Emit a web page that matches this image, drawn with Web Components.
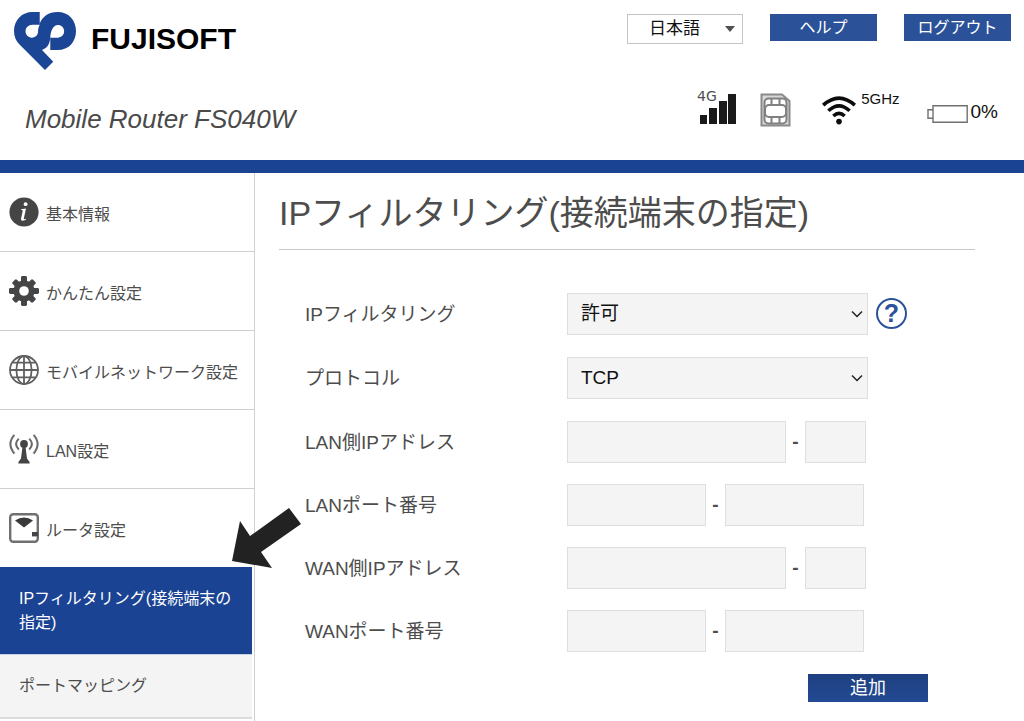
<!DOCTYPE html>
<html lang="ja">
<head>
<meta charset="utf-8">
<meta name="viewport" content="width=device-width, initial-scale=1">
<title>Mobile Router FS040W</title>
<style>
html, body { margin: 0; height: 100%; }
body { font-family: "Liberation Sans", "Noto Sans CJK JP", sans-serif; color: #4d4d4d; background: #fff; }
</style>
</head>
<body>
<router-app></router-app>
<script>
const define = (name, html, setup) => {
  const template = document.createElement('template');
  template.innerHTML = html;
  customElements.define(name, class extends HTMLElement {
    constructor() {
      super();
      this.attachShadow({ mode: 'open' }).append(template.content.cloneNode(true));
    }
    connectedCallback() { if (setup) setup(this, this.shadowRoot); }
  });
};

const ICONS = {
  info: `<circle cx="15" cy="15" r="14.6" fill="#454545"/><circle cx="16.6" cy="7.2" r="1.9" fill="#fff"/><path d="M12.2 12.2 17 11.4 14.8 21.6Q14.6 22.8 17 21.8L16.8 22.8Q11.6 25 12 21.8L13.8 13.6Q13.6 12.9 12 13.1Z" fill="#fff"/>`,
  gear: `<g fill="#454545"><rect x="12" y="0" width="6" height="30" rx="1.4"/><rect x="0" y="12" width="30" height="6" rx="1.4"/><g transform="rotate(45 15 15)"><rect x="12" y="0.6" width="6" height="28.8" rx="1.4"/><rect x="0.6" y="12" width="28.8" height="6" rx="1.4"/></g><circle cx="15" cy="15" r="10.6"/></g><circle cx="15" cy="15" r="4.8" fill="#fff"/>`,
  globe: `<g fill="none" stroke="#606060" stroke-width="1.8"><circle cx="15" cy="15" r="14"/><ellipse cx="15" cy="15" rx="7.6" ry="14"/><path d="M15 1V29M1 15H29M3.6 7.6H26.4M3.6 22.4H26.4"/></g>`,
  antenna: `<g fill="none" stroke="#6a6a6a" stroke-width="2"><path d="M5.4 .8Q-2.6 10 5.4 19.6M24.6 .8Q32.6 10 24.6 19.6M9.8 4.6Q4.4 10 9.8 15.6M20.2 4.6Q25.6 10 20.2 15.6"/></g><circle cx="15" cy="10" r="3.9" fill="#454545"/><path d="M13.6 12H16.4L18 24.4 20.6 28V29.6H9.4V28L12 24.4Z" fill="#454545"/>`,
  router: `<rect x="1.2" y="1.2" width="27.6" height="27.6" rx="3" fill="#fff" stroke="#707070" stroke-width="2.4"/><path d="M6 7.6Q15 1.400 24 7.6L15 14.6Z" fill="#3a3a3a"/><rect x="23" y="19" width="6" height="4.4" fill="#454545"/>`
};

define('brand-logo', `
<style>
:host { display: flex; align-items: center; gap: 15px; color: #000; font: bold 30px/36px "Liberation Sans", sans-serif; }
svg { width: 62px; height: 58px; flex: none; }
span { padding-bottom: 4px; }
</style>
<svg viewBox="18 18 188 174" preserveAspectRatio="none" aria-hidden="true">
  <path fill="#1b4595" fill-rule="evenodd" d="M96 18H74C42 18 18 42 18 75C18 92 24 104 34 115L112 192L137 167L103 132C120 126 127 113 128 94V132H150C184 132 206 108 206 75C206 42 184 18 150 18C122 18 105 32 97 50L96 54ZM96 56H74C61 56 53 65 53 76C53 87 61 95 72 95C84 95 91 87 91 76C91 68 93 62 96 56ZM128 95C129 74 137 57 151 57C162 57 170 65 170 76C170 87 162 95 150 95Z"/>
</svg>
<span>FUJISOFT</span>`);

define('blue-button', `
<style>
:host { display: block; width: 107px; height: 27px; }
:host([large]) { width: 120px; height: 28px; }
button { display: block; width: 100%; height: 100%; margin: 0; padding: 0; border: 0; background: #2b5299; color: #fff; font: 16px/26px "Liberation Sans", "Noto Sans CJK JP", sans-serif; cursor: pointer; }
:host([large]) button { background: linear-gradient(#1e4080, #234a93); font-size: 18px; }
</style>
<button type="button"><slot></slot></button>`);

define('language-picker', `
<style>
:host { display: grid; width: 116px; height: 30px; }
select, svg { grid-area: 1 / 1; }
select { appearance: none; box-sizing: border-box; width: 100%; height: 100%; margin: 0; padding: 0 0 0 21px; border: 1px solid #c4c4c4; border-radius: 0; background: #fff; color: #111; font: 17px/26px "Liberation Sans", "Noto Sans CJK JP", sans-serif; }
svg { place-self: center end; width: 10px; height: 6px; margin-right: 8px; pointer-events: none; }
</style>
<select aria-label="言語"><option>日本語</option></select>
<svg viewBox="0 0 10 6" aria-hidden="true"><path d="M0 0H10L5 6Z" fill="#505050"/></svg>`);

define('status-bar', `
<style>
:host { display: flex; align-items: flex-start; color: #111; }
svg { display: block; flex: none; }
.signal { width: 40px; height: 38px; }
.sim { width: 31px; height: 34px; margin: 5px 0 0 23px; }
.wifi { width: 34px; height: 29px; margin: 8px 0 0 31px; }
.band { font-size: 15px; line-height: 20px; margin: 1px 0 0 5px; }
.battery { width: 41px; height: 18px; margin: 17px 0 0 27px; }
.level { font-size: 19px; line-height: 24px; margin: 12px 0 0 3px; }
</style>
<svg class="signal" viewBox="0 0 40 38" role="img" aria-label="4G">
  <text x="0" y="13" font-family="DejaVu Sans" font-size="14" fill="#505050">4G</text>
  <path fill="#1a1a1a" d="M3 27H10V36H3ZM12 20H20V36H12ZM22 13H30V36H22ZM31 6H39V36H31Z"/>
</svg>
<svg class="sim" viewBox="0 0 31 34" aria-hidden="true">
  <path d="M1.500 1.500H22L29.500 8V32.500H1.500Z" fill="#d8d8d8" stroke="#8a8a8a" stroke-width="2"/>
  <rect x="4.500" y="5.500" width="22" height="25" rx="4" fill="#fff" stroke="#808080" stroke-width="2"/>
  <path d="M11.500 6V12M19.500 6V12M11.500 24V30M19.500 24V30" stroke="#808080" stroke-width="2"/>
  <rect x="5" y="12" width="21" height="12" rx="4" fill="#fff" stroke="#808080" stroke-width="2"/>
</svg>
<svg class="wifi" viewBox="0 0 34 29" aria-hidden="true">
  <g fill="none" stroke="#0c0c0c" stroke-width="3.6"><path d="M1.2 9.2Q17-5 32.8 9.2"/><path d="M6.4 14.8Q17 4.8 27.6 14.8"/><path d="M11.4 20Q17 14.6 22.6 20"/></g><circle cx="17" cy="25.6" r="2.8" fill="#0c0c0c"/>
</svg>
<span class="band">5GHz</span>
<svg class="battery" viewBox="0 0 41 18" aria-hidden="true">
  <path d="M6 .8H40.2V17.2H6ZM6 4.8H1V13.2H6Z" fill="#fff" stroke="#707070" stroke-width="1.4"/>
</svg>
<span class="level">0%</span>`);

define('app-header', `
<style>
:host { display: flex; justify-content: space-between; height: 160px; border-bottom: 13px solid #1b4394; flex: none; }
.left { padding: 12px 0 0 14px; }
h1 { margin: 33px 0 0 11px; font: italic 26px/32px "Liberation Sans", sans-serif; color: #4a4a4a; }
.right { display: flex; flex-direction: column; align-items: flex-end; padding: 14px 13px 0 0; }
.tools { display: flex; gap: 27px; height: 30px; }
status-bar { margin: 44px 13px 0 0; }
</style>
<div class="left"><brand-logo></brand-logo><h1>Mobile Router FS040W</h1></div>
<div class="right">
  <div class="tools"><language-picker></language-picker><blue-button>ヘルプ</blue-button><blue-button>ログアウト</blue-button></div>
  <status-bar></status-bar>
</div>`);

define('nav-item', `
<style>
:host { display: block; border-bottom: 1px solid #cfcfcf; }
:host([last]) { border-bottom: 0; }
a { display: flex; align-items: center; gap: 7px; height: 78px; padding-left: 9px; color: inherit; text-decoration: none; font-size: 16px; line-height: 24px; }
svg { width: 30px; height: 30px; flex: none; }
span { padding-top: 6px; }
</style>
<a href="#"><svg viewBox="0 0 30 30" aria-hidden="true"></svg><span><slot></slot></span></a>`,
(host, root) => { root.querySelector('svg').innerHTML = ICONS[host.getAttribute('icon')]; });

define('nav-subitem', `
<style>
:host { display: block; margin-right: 2px; border-bottom: 2px solid #dcdcdc; background: #f4f4f4; }
:host([active]) { background: #1b4394; color: #fff; border-bottom: 1px solid #c9cfe0; }
a { display: block; padding: 19px; color: inherit; text-decoration: none; font-size: 16px; line-height: 24px; }
:host([active]) a { padding: 20px 19px 19px; }
</style>
<a href="#"><slot></slot></a>`);

define('side-nav', `
<style>
:host { display: block; box-sizing: border-box; width: 255px; flex: none; border-right: 1px solid #d0d0d0; position: relative; }
.pointer { position: absolute; left: 232px; top: 335px; width: 69px; height: 60px; pointer-events: none; }
</style>
<nav>
  <nav-item icon="info">基本情報</nav-item>
  <nav-item icon="gear">かんたん設定</nav-item>
  <nav-item icon="globe">モバイルネットワーク設定</nav-item>
  <nav-item icon="antenna">LAN設定</nav-item>
  <nav-item icon="router" last>ルータ設定</nav-item>
  <nav-subitem active>IPフィルタリング(接続端末の指定)</nav-subitem>
  <nav-subitem>ポートマッピング</nav-subitem>
</nav>
<svg class="pointer" viewBox="0 0 69 60" aria-hidden="true"><path d="M0 53 8 13 18 28 57 0 69 16 29 44 40 60Z" fill="#222"/></svg>`);

const FIELD_CSS = `
:host { display: grid; grid-template-columns: 262px auto 1fr; align-items: start; }
label { font-size: 19px; line-height: 42px; padding-top: 1px; }
select, input { box-sizing: border-box; height: 42px; margin: 0; border: 1px solid #dedede; border-radius: 0; background: #f4f4f4; color: #111; font: 19px/24px "Liberation Sans", "Noto Sans CJK JP", sans-serif; }`;

define('select-row', `
<style>${FIELD_CSS}
:host { height: 64px; }
.box { display: grid; width: 301px; }
.box > * { grid-area: 1 / 1; }
select { appearance: none; width: 100%; padding: 0 13px; }
svg { place-self: center end; width: 12px; height: 8px; margin-right: 5px; pointer-events: none; }
::slotted(*) { margin: 5px 0 0 8px; }
</style>
<label for="f"></label>
<div class="box"><select id="f"><option></option></select><svg viewBox="0 0 12 8" aria-hidden="true"><path d="M1 1.500 6 6.500 11 1.500" fill="none" stroke="#222" stroke-width="1.500"/></svg></div>
<slot></slot>`,
(host, root) => {
  root.querySelector('label').textContent = host.getAttribute('label');
  root.querySelector('option').textContent = host.getAttribute('value');
});

define('range-row', `
<style>${FIELD_CSS}
:host { height: 63px; --from: 219px; --to: 61px; }
:host([port]) { --from: 139px; --to: 139px; }
.box { display: flex; align-items: center; }
#f { width: var(--from); }
#g { width: var(--to); }
input { padding: 0 12px; }
span { width: 19px; text-align: center; font-size: 19px; font-weight: bold; }
</style>
<label for="f"></label>
<div class="box"><input id="f" type="text"><span>-</span><input id="g" type="text"></div>`,
(host, root) => {
  const label = host.getAttribute('label');
  root.querySelector('label').textContent = label;
  root.getElementById('g').setAttribute('aria-label', label + ' (終了)');
});

define('help-button', `
<style>
:host { display: block; width: 31px; height: 31px; }
button { box-sizing: border-box; display: block; width: 100%; height: 100%; margin: 0; padding: 0; border: 2px solid #2b5299; border-radius: 50%; background: #fff; color: #2b5299; font: bold 25px/27px "Liberation Sans", sans-serif; cursor: pointer; }
</style>
<button type="button" aria-label="ヘルプを表示">?</button>`);

define('filter-page', `
<style>
:host { display: block; flex: 1; min-width: 0; padding: 15px 49px 0 24px; }
h2 { margin: 0; padding-bottom: 11px; border-bottom: 1px solid #c8c8c8; font-weight: normal; font-size: 34px; line-height: 50px; }
form { margin: 43px 0 0 26px; }
blue-button { margin: 1px 0 0 503px; }
</style>
<h2>IPフィルタリング(接続端末の指定)</h2>
<form>
  <select-row label="IPフィルタリング" value="許可"><help-button></help-button></select-row>
  <select-row label="プロトコル" value="TCP"></select-row>
  <range-row label="LAN側IPアドレス"></range-row>
  <range-row label="LANポート番号" port></range-row>
  <range-row label="WAN側IPアドレス"></range-row>
  <range-row label="WANポート番号" port></range-row>
  <blue-button large>追加</blue-button>
</form>`);

define('router-app', `
<style>
:host { display: flex; flex-direction: column; min-height: 100%; }
main { display: flex; flex: 1; }
</style>
<app-header></app-header>
<main><side-nav></side-nav><filter-page></filter-page></main>`);
</script>
</body>
</html>
